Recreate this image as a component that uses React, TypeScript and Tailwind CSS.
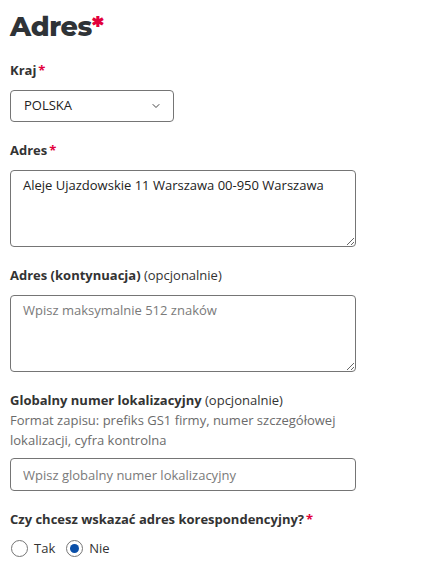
import { ChevronDown } from "lucide-react";

const labelCls = "block text-[13px] font-bold text-[#333333] leading-5";
const fieldCls =
  "block w-[346px] rounded-[4px] border border-[#757575] bg-white px-3 text-[13px] text-[#222222] placeholder:text-[#7a7a7a] outline-none";

function Star() {
  return <span className="text-[#e2003c] ml-[2px]">*</span>;
}

function Radio({ label, checked }: { label: string; checked?: boolean }) {
  return (
    <label className="flex items-center gap-[6px] text-[13px] leading-5 text-[#333333]">
      <span className="flex h-[17px] w-[17px] items-center justify-center rounded-full border border-[#767676] bg-white">
        {checked && <span className="h-[9px] w-[9px] rounded-full bg-[#0a4fa8]" />}
      </span>
      {label}
    </label>
  );
}

export default function App() {
  return (
    <div className="min-h-[566px] bg-white px-[10px] pt-[7px] font-['Open_Sans',sans-serif] text-[#333333]">
      <h1 className="text-[27px] font-extrabold leading-[40px] text-[#2f3337] font-['Montserrat','Open_Sans',sans-serif] tracking-[-0.4px]">
        Adres<span className="text-[#e2003c]">*</span>
      </h1>

      <div className="mt-[13px]">
        <label className={labelCls}>
          Kraj<Star />
        </label>
        <div className="relative mt-[10px] w-[164px]">
          <select className="block h-[32px] w-full appearance-none rounded-[4px] border border-[#757575] bg-white pl-[13px] pr-8 text-[13px] text-[#222222] outline-none">
            <option>POLSKA</option>
          </select>
          <ChevronDown className="pointer-events-none absolute right-[12px] top-[10px] h-[12px] w-[12px] text-[#444444]" strokeWidth={2} />
        </div>
      </div>

      <div className="mt-[18px]">
        <label className={labelCls}>
          Adres<Star />
        </label>
        <textarea
          className={fieldCls + " mt-[10px] h-[77px] py-[4px] leading-5"}
          defaultValue="Aleje Ujazdowskie 11 Warszawa 00-950 Warszawa"
        />
      </div>

      <div className="mt-[18px]">
        <label className={labelCls}>
          Adres (kontynuacja) <span className="font-normal">(opcjonalnie)</span>
        </label>
        <textarea
          className={fieldCls + " mt-[10px] h-[77px] py-[4px] leading-5"}
          placeholder="Wpisz maksymalnie 512 znaków"
        />
      </div>

      <div className="mt-[18px]">
        <label className={labelCls}>
          Globalny numer lokalizacyjny <span className="font-normal">(opcjonalnie)</span>
        </label>
        <p className="w-[346px] text-[13px] leading-5 text-[#6b6b6b]">
          Format zapisu: prefiks GS1 firmy, numer szczegółowej lokalizacji, cyfra kontrolna
        </p>
        <input
          className={fieldCls + " mt-[8px] h-[33px]"}
          placeholder="Wpisz globalny numer lokalizacyjny"
        />
      </div>

      <div className="mt-[18px]">
        <label className={labelCls}>
          Czy chcesz wskazać adres korespondencyjny?<Star />
        </label>
        <div className="mt-[9px] flex items-center gap-[11px] pl-[1px]">
          <Radio label="Tak" />
          <Radio label="Nie" checked />
        </div>
      </div>
    </div>
  );
}
